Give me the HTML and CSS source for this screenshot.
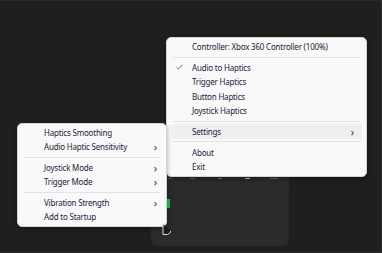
FILE: index.html
```html
<!DOCTYPE html>
<html>
<head>
<meta charset="utf-8">
<link rel="stylesheet" href="styles.css">
</head>
<body>
<div class="screen">
  <div class="panel">
    <div class="peek peek-blue1"></div>
    <div class="peek peek-blue2"></div>
    <div class="peek peek-green1"></div>
    <div class="peek peek-white"></div>
    <div class="peek peek-green2"></div>
    <div class="greenbar"></div>
  </div>

  <div class="menu main-menu">
    <div class="item"><span class="label">Controller: Xbox 360 Controller (100%)</span></div>
    <div class="sep"></div>
    <div class="item"><span class="check"><svg width="7" height="6" viewBox="0 0 7 6"><path d="M0.6 3.2 L2.5 5 L6.4 0.8" fill="none" stroke="#5a5a5a" stroke-width="0.9"/></svg></span><span class="label">Audio to Haptics</span></div>
    <div class="item"><span class="label">Trigger Haptics</span></div>
    <div class="item"><span class="label">Button Haptics</span></div>
    <div class="item"><span class="label">Joystick Haptics</span></div>
    <div class="sep"></div>
    <div class="item active"><span class="label">Settings</span><span class="arrow">›</span></div>
    <div class="sep"></div>
    <div class="item"><span class="label">About</span></div>
    <div class="item"><span class="label">Exit</span></div>
  </div>

  <div class="menu sub-menu">
    <div class="item"><span class="label">Haptics Smoothing</span></div>
    <div class="item"><span class="label">Audio Haptic Sensitivity</span><span class="arrow">›</span></div>
    <div class="sep"></div>
    <div class="item"><span class="label">Joystick Mode</span><span class="arrow">›</span></div>
    <div class="item"><span class="label">Trigger Mode</span><span class="arrow">›</span></div>
    <div class="sep"></div>
    <div class="item"><span class="label">Vibration Strength</span><span class="arrow">›</span></div>
    <div class="item"><span class="label">Add to Startup</span></div>
  </div>

  <svg class="cursor" width="10" height="14" viewBox="0 0 10 14">
    <path d="M1 1 V11.5 H5.5 L8.5 9.5 V8" fill="#1a1a1a" stroke="#d8d8d8" stroke-width="1"/>
  </svg>
</div>
</body>
</html>
```
FILE: styles.css
```css
* { box-sizing: border-box; }
html, body {
  margin: 0;
  padding: 0;
  background: #1f1f1f;
}
.screen {
  position: relative;
  width: 382px;
  height: 253px;
  background: #1f1f1f;
  border-top: 1px solid #2a2a2a;
  border-right: 1px solid #2e2e2e;
  border-bottom: 1px solid #2e2e2e;
  overflow: hidden;
  padding: 139px 0 0 151px;
}
.panel {
  position: relative;
  width: 138px;
  height: 106px;
  background: #2b2b2b;
  border-radius: 6px;
}
.peek {
  position: absolute;
  top: 38px;
  height: 1px;
  opacity: 0.8;
}
.peek-blue1 { left: 17px; width: 4px; background: #2f6fd0; }
.peek-blue2 { left: 39px; width: 5px; background: #3a7fe0; }
.peek-green1 { left: 67px; width: 4px; background: #4caf50; }
.peek-white { left: 94px; width: 5px; background: #e8e8e8; }
.peek-green2 { left: 119px; width: 8px; background: #3aa845; }
.greenbar {
  position: absolute;
  left: 16px;
  top: 59px;
  width: 3px;
  height: 9px;
  background: #1fc24a;
}
.menu {
  position: absolute;
  background: #f9f9f9;
  border: 1px solid #d4d4d4;
  border-radius: 5px;
  box-shadow: 0 2px 5px rgba(0,0,0,0.35);
  font-family: "Noto Sans", "Open Sans", sans-serif;
  font-size: 8px;
  letter-spacing: -0.2px;
  color: #24213a;
  display: flex;
  flex-direction: column;
}
.main-menu {
  left: 166px;
  top: 36px;
  width: 201px;
  height: 140px;
  padding: 1.5px 0 2px;
}
.sub-menu {
  left: 17px;
  top: 122px;
  width: 150px;
  height: 104px;
  padding: 1.5px 0 2px;
}
.item {
  position: relative;
  height: 14.67px;
  display: flex;
  align-items: center;
  margin: 0 4px;
  border-radius: 3px;
}
.main-menu .item { padding-left: 21px; padding-right: 8px; }
.sub-menu .item { padding-left: 22px; padding-right: 5px; }
.item.active { background: #efefef; }
.label { flex: 1; white-space: nowrap; }
.check {
  position: absolute;
  left: 5px;
  top: 4px;
  display: flex;
}
.arrow {
  font-size: 11px;
  line-height: 1;
  color: #333;
  margin-top: -1px;
}
.sep {
  height: 1px;
  background: #e3e3e3;
  margin: 2.65px 6px;
}
.cursor {
  position: absolute;
  left: 162px;
  top: 222px;
}
```
